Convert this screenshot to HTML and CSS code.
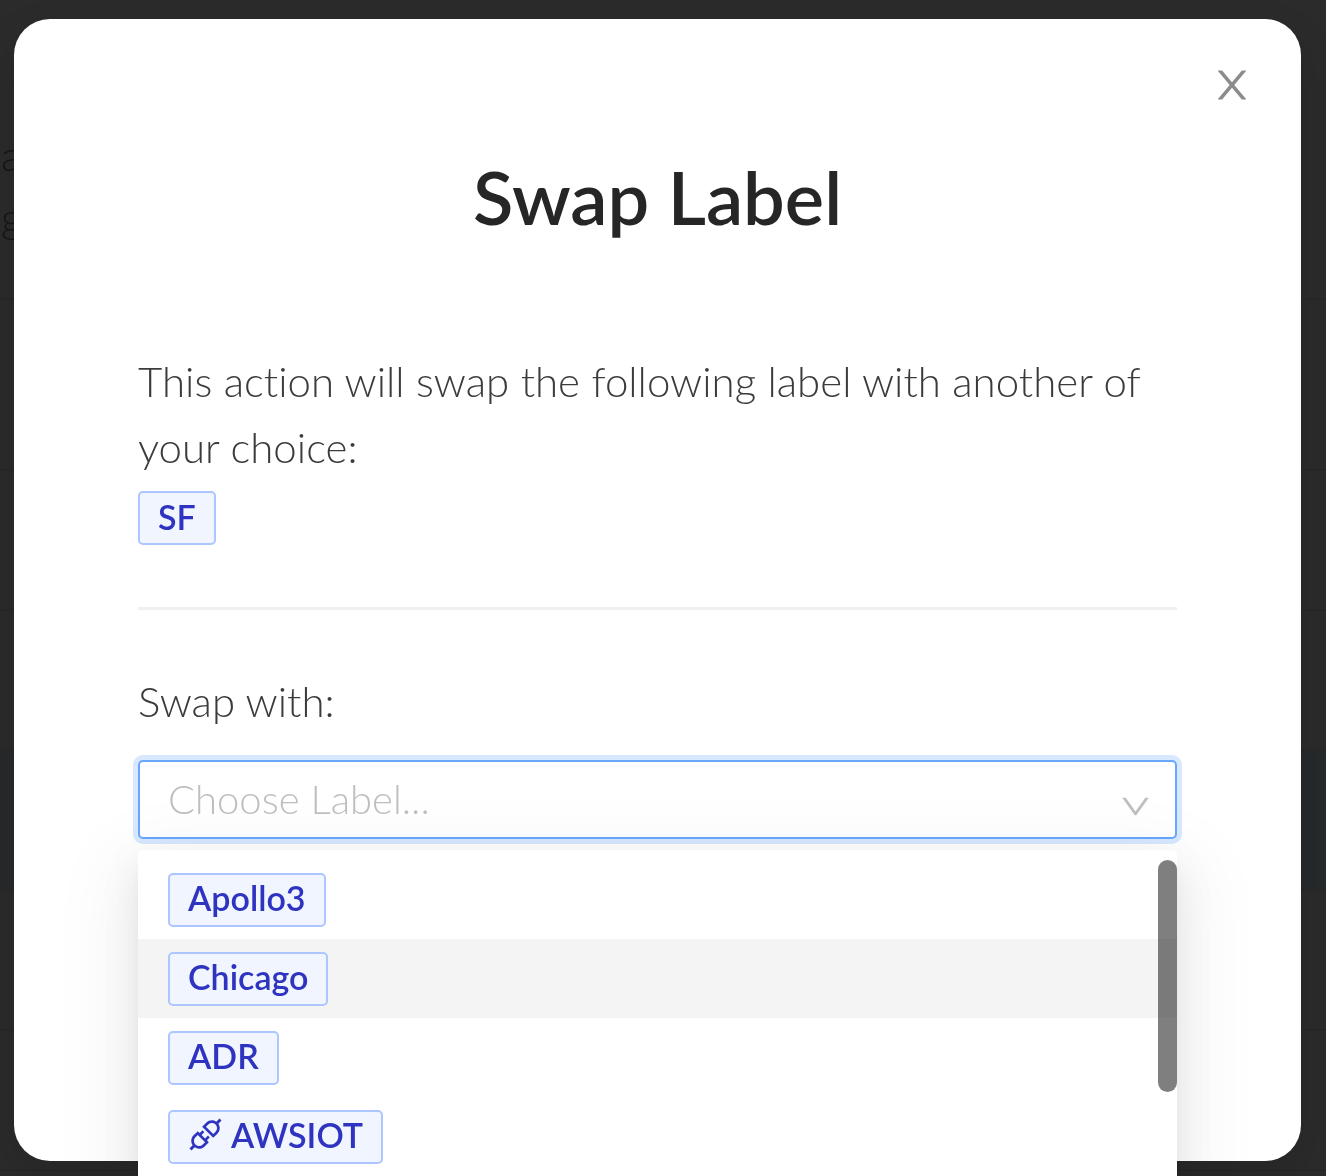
FILE: index.html
```html
<!DOCTYPE html>
<html lang="en">
<head>
<meta charset="utf-8">
<title>Swap Label</title>
<meta name="viewport" content="width=device-width, initial-scale=1">
<link rel="stylesheet" href="styles.css">
</head>
<body>
<div class="page" aria-hidden="true">
  <div class="page-row page-head"><p>a</p><p>g</p></div>
  <div class="page-row page-tall"></div>
  <div class="page-row"></div>
  <div class="page-row"></div>
  <div class="page-row page-selected"></div>
  <div class="page-row"></div>
  <div class="page-row"></div>
</div>
<div class="overlay">
  <div class="modal" role="dialog" aria-modal="true" aria-labelledby="modal-title">
    <button class="close" type="button" aria-label="Close">
      <svg viewBox="64 64 896 896" width="40" height="40" fill="currentColor" aria-hidden="true"><path d="M563.8 512l262.5-312.9c4.4-5.2.7-13.1-6.1-13.1h-79.8c-4.7 0-9.2 2.1-12.3 5.7L511.6 449.8 295.1 191.7c-3-3.6-7.5-5.7-12.3-5.7H203c-6.8 0-10.5 7.9-6.1 13.1L459.4 512 196.9 824.9A7.95 7.95 0 0 0 203 838h79.8c4.7 0 9.2-2.1 12.3-5.7l216.5-258.1 216.5 258.1c3 3.6 7.5 5.7 12.3 5.7h79.8c6.8 0 10.5-7.9 6.1-13.1L563.8 512z"/></svg>
    </button>
    <h1 class="title" id="modal-title">Swap Label</h1>
    <p class="text">This action will swap the following label with another of your choice:</p>
    <div class="current"><span class="tag">SF</span></div>
    <hr class="divider">
    <label class="text" for="swap-with">Swap with:</label>
    <div class="picker">
      <select class="select" id="swap-with">
        <option value="" selected>Choose Label...</option>
        <option>Apollo3</option>
        <option>Chicago</option>
        <option>ADR</option>
        <option>AWSIOT</option>
      </select>
      <svg class="arrow" viewBox="64 64 896 896" width="31" height="31" fill="currentColor" aria-hidden="true"><path d="M884 256h-75c-5.1 0-9.9 2.5-12.9 6.6L512 654.2 227.9 262.6c-3-4.1-7.8-6.6-12.9-6.6h-75c-6.5 0-10.3 7.4-6.5 12.7l352.6 486.1c12.8 17.6 39 17.6 51.7 0l352.6-486.1c3.9-5.3.1-12.7-6.4-12.7z"/></svg>
      <div class="dropdown">
        <ul class="options" role="listbox" aria-label="Labels">
          <li class="option" role="option"><span class="tag">Apollo3</span></li>
          <li class="option active" role="option" aria-selected="true"><span class="tag">Chicago</span></li>
          <li class="option" role="option"><span class="tag">ADR</span></li>
          <li class="option" role="option"><span class="tag"><svg viewBox="64 64 896 896" width="35" height="35" fill="currentColor" aria-hidden="true"><path d="M917.7 148.8l-42.4-42.4c-1.6-1.6-3.6-2.3-5.7-2.3s-4.1.8-5.7 2.3l-76.1 76.1a199.27 199.27 0 0 0-112.1-34.3c-51.2 0-102.4 19.5-141.5 58.6L432.3 308.7a8.03 8.03 0 0 0 0 11.3L704 591.7c1.6 1.6 3.6 2.3 5.7 2.3 2 0 4.1-.8 5.7-2.3l101.9-101.9c68.9-69 77-175.7 24.3-253.5l76.1-76.1c3.1-3.2 3.1-8.3 0-11.4zM769.1 441.7l-59.4 59.4-186.8-186.8 59.4-59.4c24.9-24.9 58.1-38.7 93.4-38.7 35.3 0 68.4 13.7 93.4 38.7 24.9 24.9 38.7 58.1 38.7 93.4 0 35.3-13.8 68.4-38.7 93.4zm-190.2 105a8.03 8.03 0 0 0-11.3 0L501 613.3 410.7 523l66.7-66.7c3.1-3.1 3.1-8.2 0-11.3L441 408.6a8.03 8.03 0 0 0-11.3 0L363 475.3l-43-43a7.85 7.85 0 0 0-5.7-2.3c-2 0-4.1.8-5.7 2.3L206.8 534.2c-68.9 69-77 175.7-24.3 253.5l-76.1 76.1a8.03 8.03 0 0 0 0 11.3l42.4 42.4c1.6 1.6 3.6 2.3 5.7 2.3s4.1-.8 5.7-2.3l76.1-76.1c33.7 22.9 72.9 34.3 112.1 34.3 51.2 0 102.4-19.5 141.5-58.6l101.9-101.9c3.1-3.1 3.1-8.2 0-11.3l-43-43 66.7-66.7c3.1-3.1 3.1-8.2 0-11.3l-36.6-36.2zM441.7 769.1a131.32 131.32 0 0 1-93.4 38.7c-35.3 0-68.4-13.7-93.4-38.7a131.32 131.32 0 0 1-38.7-93.4c0-35.3 13.7-68.4 38.7-93.4l59.4-59.4 186.8 186.8-59.4 59.4z"/></svg>AWSIOT</span></li>
        </ul>
        <div class="scroll-thumb"></div>
      </div>
    </div>
  </div>
</div>
</body>
</html>
```
FILE: styles.css
```css
* {
  box-sizing: border-box;
}

html,
body {
  height: 100%;
}

body {
  margin: 0;
  overflow: hidden;
  background: #2b2b2b;
  color: #3b3b3b;
  font-family: Lato, "Open Sans", sans-serif;
  font-size: 42px;
  font-weight: 300;
  font-variant-ligatures: none;
}

p,
h1,
ul {
  margin: 0;
  padding: 0;
}

/* dimmed page behind the dialog */
.page {
  position: fixed;
  inset: 0;
  color: #161616;
  font-size: 42px;
  line-height: 62px;
}

.page-row {
  height: 140px;
  border-bottom: 2px solid #282828;
}

.page-head {
  height: 300px;
  padding: 124px 0 0 1px;
}

.page-tall {
  height: 171px;
}

.page-selected {
  background: #272a2c;
}

/* dialog */
.overlay {
  position: relative;
  height: 100%;
  padding: 19px 25px 15px 14px;
}

.modal {
  position: relative;
  min-height: 100%;
  padding: 132px 124px 0;
  border-radius: 36px;
  background: #fff;
  box-shadow: 0 16px 42px rgba(0, 0, 0, 0.12);
}

.close {
  position: absolute;
  top: 46px;
  right: 49px;
  width: 40px;
  height: 40px;
  padding: 0;
  border: 0;
  background: none;
  color: #8c8c8c;
}

.close svg {
  display: block;
}

.title {
  margin-bottom: 105px;
  color: #262626;
  font-size: 74px;
  font-weight: 600;
  line-height: 92px;
  text-align: center;
}

.text {
  display: block;
  line-height: 66px;
}

.current {
  display: flex;
  padding-top: 11px;
}

.tag {
  display: inline-flex;
  align-items: center;
  gap: 8px;
  height: 54px;
  padding: 0 18px 4px;
  border: 2px solid #adc6ff;
  border-radius: 5px;
  background: #f0f5ff;
  color: #2f34c0;
  font-size: 34px;
  font-weight: 600;
}

.divider {
  height: 3px;
  margin: 62px 0 58px;
  border: 0;
  background: #f0f0f0;
}

.picker {
  position: relative;
  margin-top: 26px;
}

.select {
  display: block;
  width: 100%;
  height: 79px;
  padding: 0 80px 2px 28px;
  border: 2px solid #69a7ff;
  border-radius: 5px;
  outline: 0;
  background: #fff;
  box-shadow: 0 0 0 5px #d7e8ff;
  color: #bfbfbf;
  font: inherit;
  font-size: 40px;
  appearance: none;
}

.arrow {
  position: absolute;
  top: 31px;
  right: 26px;
  color: #bfbfbf;
}

.dropdown {
  position: absolute;
  top: 90px;
  left: 0;
  right: 0;
  padding: 10px 0;
  border-radius: 5px;
  background: #fff;
  box-shadow:
    0 8px 16px -10px rgba(0, 0, 0, 0.12),
    0 16px 42px rgba(0, 0, 0, 0.08),
    0 24px 74px 21px rgba(0, 0, 0, 0.05);
}

.options {
  list-style: none;
}

.option {
  display: flex;
  align-items: center;
  height: 79px;
  padding: 0 30px;
}

.option.active {
  background: #f4f4f4;
}

.scroll-thumb {
  position: absolute;
  top: 10px;
  right: 0;
  width: 19px;
  height: 232px;
  border-radius: 10px;
  background: rgba(0, 0, 0, 0.5);
}
```
